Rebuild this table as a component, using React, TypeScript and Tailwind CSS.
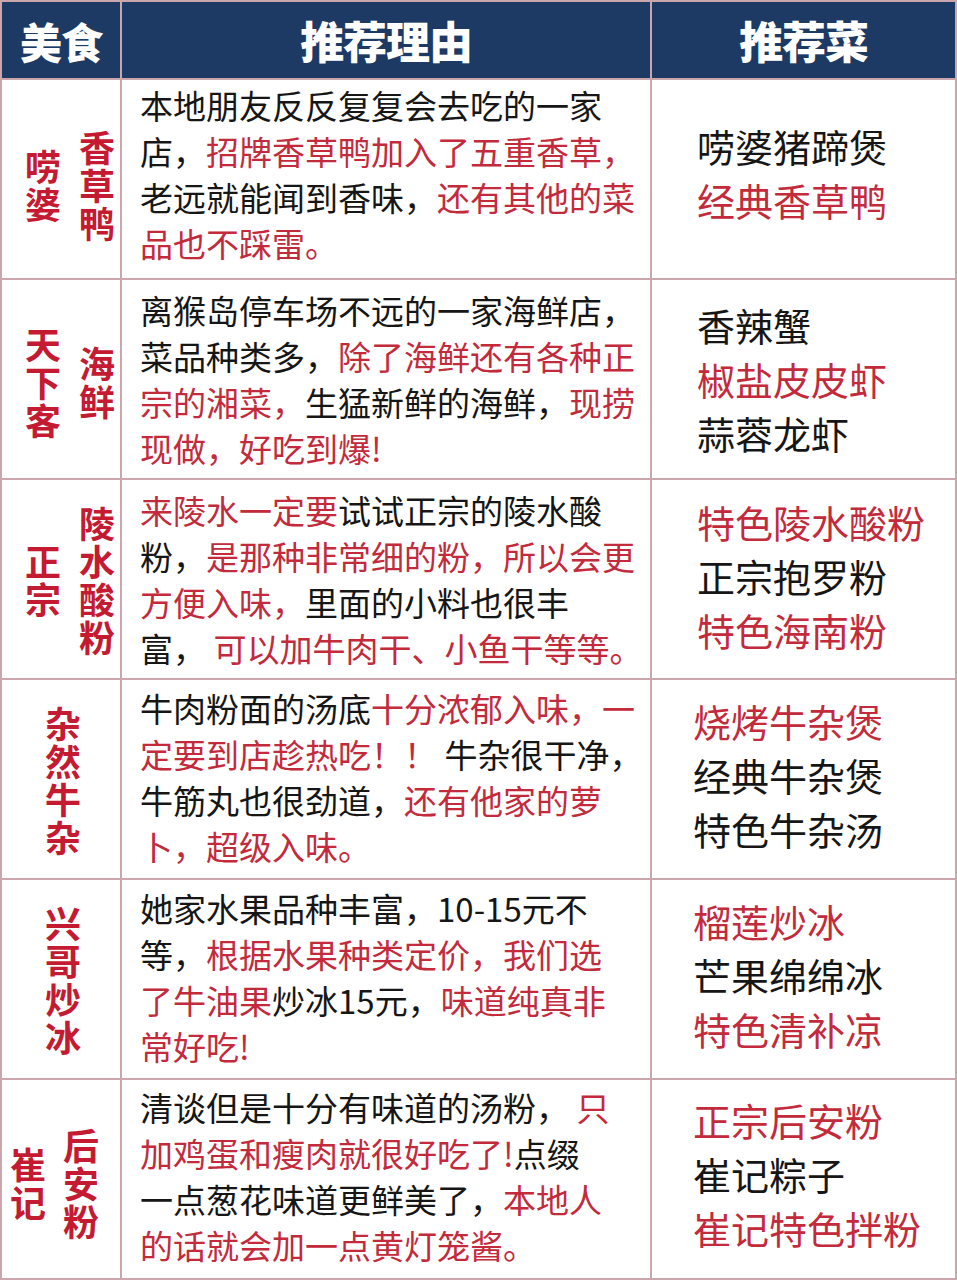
import React from 'react';

type Seg = [string, boolean]; // [text, red]

const font = { fontFamily: '"Noto Sans CJK SC", "Noto Sans", sans-serif' };

const rows: {
  names: string[];
  namePad: string;
  nameGap: string;
  reason: Seg[][];
  reasonPad: string;
  dishes: Seg[];
  dishPad: string;
}[] = [
  {
    names: ['唠婆', '香草鸭'],
    namePad: 'pl-[23px] pt-[10px]',
    nameGap: 'gap-[18px]',
    reason: [
      [['本地朋友反反复复会去吃的一家', false]],
      [['店，', false], ['招牌香草鸭加入了五重香草，', true]],
      [['老远就能闻到香味，', false], ['还有其他的菜', true]],
      [['品也不踩雷。', true]],
    ],
    reasonPad: 'pb-[10px]',
    dishes: [['唠婆猪蹄煲', false], ['经典香草鸭', true]],
    dishPad: 'pl-[45px] pb-[12px]',
  },
  {
    names: ['天下客', '海鲜'],
    namePad: 'pl-[23px] pt-[4px]',
    nameGap: 'gap-[18px]',
    reason: [
      [['离猴岛停车场不远的一家海鲜店，', false]],
      [['菜品种类多，', false], ['除了海鲜还有各种正', true]],
      [['宗的湘菜，', true], ['生猛新鲜的海鲜，', false], ['现捞', true]],
      [['现做，好吃到爆!', true]],
    ],
    reasonPad: 'pb-[0px]',
    dishes: [['香辣蟹', false], ['椒盐皮皮虾', true], ['蒜蓉龙虾', false]],
    dishPad: 'pl-[45px] pb-[0px]',
  },
  {
    names: ['正宗', '陵水酸粉'],
    namePad: 'pl-[23px]',
    nameGap: 'gap-[18px]',
    reason: [
      [['来陵水一定要', true], ['试试正宗的陵水酸', false]],
      [['粉，', false], ['是那种非常细的粉，所以会更', true]],
      [['方便入味，', true], ['里面的小料也很丰', false]],
      [['富， ', false], ['可以加牛肉干、小鱼干等等。', true]],
    ],
    reasonPad: 'pb-[0px]',
    dishes: [['特色陵水酸粉', true], ['正宗抱罗粉', false], ['特色海南粉', true]],
    dishPad: 'pl-[45px] pb-[6px]',
  },
  {
    names: ['杂然牛杂'],
    namePad: 'pl-[43px]',
    nameGap: 'gap-[18px]',
    reason: [
      [['牛肉粉面的汤底', false], ['十分浓郁入味，一', true]],
      [['定要到店趁热吃！！', true], [' 牛杂很干净，', false]],
      [['牛筋丸也很劲道，', false], ['还有他家的萝', true]],
      [['卜，超级入味。', true]],
    ],
    reasonPad: 'pb-[4px]',
    dishes: [['烧烤牛杂煲', true], ['经典牛杂煲', false], ['特色牛杂汤', false]],
    dishPad: 'pl-[41px] pb-[8px]',
  },
  {
    names: ['兴哥炒冰'],
    namePad: 'pl-[43px]',
    nameGap: 'gap-[18px]',
    reason: [
      [['她家水果品种丰富，10-15元不', false]],
      [['等，', false], ['根据水果种类定价，我们选', true]],
      [['了牛油果', true], ['炒冰15元，', false], ['味道纯真非', true]],
      [['常好吃!', true]],
    ],
    reasonPad: 'pb-[4px]',
    dishes: [['榴莲炒冰', true], ['芒果绵绵冰', false], ['特色清补凉', true]],
    dishPad: 'pl-[41px] pb-[8px]',
  },
  {
    names: ['崔记', '后安粉'],
    namePad: 'pl-[8px] pt-[6px]',
    nameGap: 'gap-[17px]',
    reason: [
      [['清谈但是十分有味道的汤粉， ', false], ['只', true]],
      [['加鸡蛋和瘦肉就很好吃了!', true], ['点缀', false]],
      [['一点葱花味道更鲜美了，', false], ['本地人', true]],
      [['的话就会加一点黄灯笼酱。', true]],
    ],
    reasonPad: 'pb-[6px]',
    dishes: [['正宗后安粉', true], ['崔记粽子', false], ['崔记特色拌粉', true]],
    dishPad: 'pl-[41px] pb-[10px]',
  },
];

const red = 'text-[#c32a3b]';
const ink = 'text-[#161616]';

export default function App() {
  return (
    <div
      className="w-[957px] h-[1280px] bg-[#cba7ad] p-[2px] grid grid-cols-[118px_528px_303px] grid-rows-[76px_repeat(6,198px)] gap-[2px]"
      style={font}
    >
      {/* header */}
      <div className="bg-[#1c3a64] flex items-center justify-center text-white text-[42px] font-black tracking-tight">
        美食
      </div>
      <div className="bg-[#1c3a64] flex items-center justify-center text-white text-[44px] font-black tracking-tight">
        推荐理由
      </div>
      <div className="bg-[#1c3a64] flex items-center justify-center text-white text-[44px] font-black tracking-tight">
        推荐菜
      </div>

      {rows.map((r, i) => (
        <React.Fragment key={i}>
          <div className={`bg-white flex items-center ${r.namePad} ${r.nameGap}`}>
            {r.names.map((n, j) => (
              <div key={j} className="flex flex-col text-[#c41a32] text-[36px] leading-[38px] font-bold">
                {n.split('').map((c, k) => (
                  <span key={k}>{c}</span>
                ))}
              </div>
            ))}
          </div>
          <div className={`bg-white flex flex-col justify-center pl-[18px] text-[33px] leading-[46px] ${r.reasonPad}`}>
            {r.reason.map((line, j) => (
              <div key={j} className="whitespace-pre">
                {line.map(([t, isRed], k) => (
                  <span key={k} className={isRed ? red : ink}>
                    {t}
                  </span>
                ))}
              </div>
            ))}
          </div>
          <div className={`bg-white flex flex-col justify-center ${r.dishPad} text-[38px] leading-[54px]`}>
            {r.dishes.map(([t, isRed], j) => (
              <div key={j} className={isRed ? red : ink}>
                {t}
              </div>
            ))}
          </div>
        </React.Fragment>
      ))}
    </div>
  );
}
